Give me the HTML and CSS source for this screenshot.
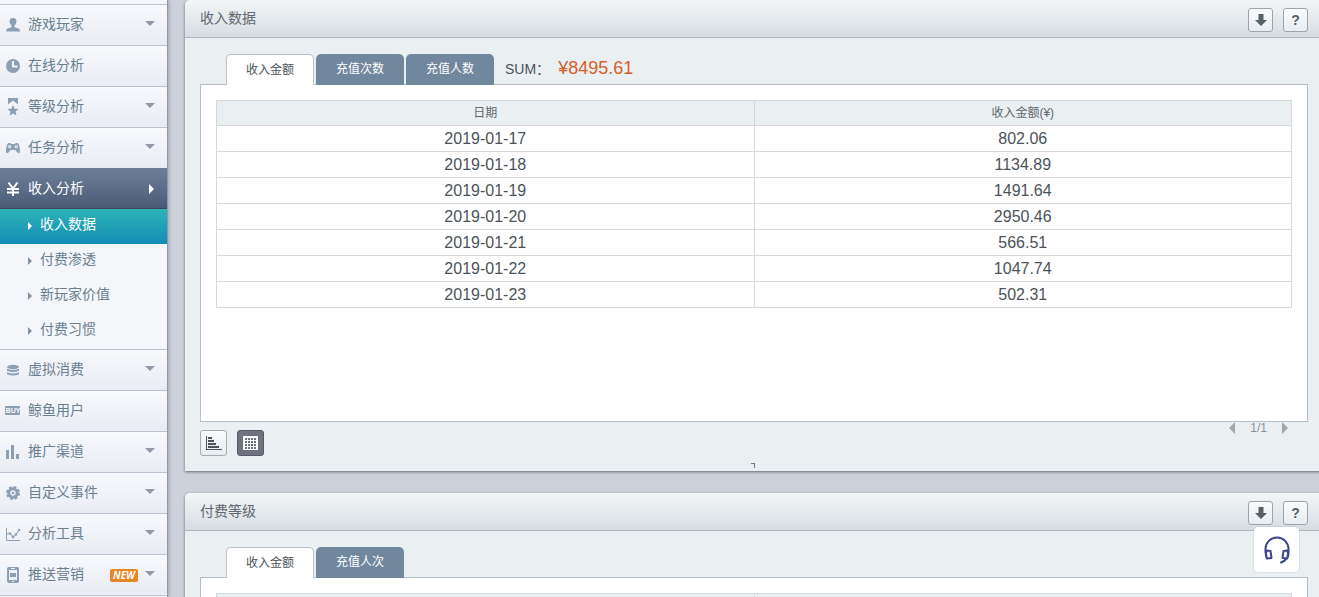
FILE: index.html
```
<!DOCTYPE html>
<html lang="zh-CN">
<head>
    <meta charset="UTF-8">
    <meta name="viewport" content="width=device-width, initial-scale=1.0">
    <title>收入数据</title>
    <link rel="stylesheet" href="styles.css">
</head>
<body>

<div class="layout">
    <nav class="sidebar">
        <a class="menu-item" href="#">
            <svg class="icon" viewBox="0 0 16 16"><path d="M8 1C5.500 1 4.400 2.600 4.600 4.600c.2 2 .9 3.200 1.900 3.900v1.700L2.500 11.500Q1 12.200 1 14.500h14q0-2.300-1.500-3l-4-1.300V8.500c1-.7 1.700-1.900 1.900-3.900C11.600 2.600 10.500 1 8 1z"/></svg>
            <span>游戏玩家</span><i class="arrow"></i>
        </a>
        <a class="menu-item" href="#">
            <svg class="icon" viewBox="0 0 16 16"><circle cx="8" cy="8" r="7"/><path class="line" d="M8 3v5.500h4.500"/></svg>
            <span>在线分析</span>
        </a>
        <a class="menu-item" href="#">
            <svg class="icon tall" viewBox="0 0 16 18"><path d="M3 0h10v6.500L8 2.500 3 6.500zM8 7l1.600 3.700 4 .3-3.100 2.600 1 4L8 15.500l-3.500 2.100 1-4L2.400 11l4-.3z"/></svg>
            <span>等级分析</span><i class="arrow"></i>
        </a>
        <a class="menu-item" href="#">
            <svg class="icon" viewBox="0 0 16 16"><path d="M4 3q2 0 2.500 1h3Q10 3 12 3c2.500 0 3 6 3 8.500 0 2-2 2-3 .5L10.300 10H5.700L4 12c-1 1.500-3 1.500-3-.5C1 9 1.500 3 4 3z"/><circle cx="4.700" cy="6.700" r="1.600" fill="#eff1f7"/><circle cx="4.700" cy="6.700" r=".6"/><circle cx="11.300" cy="6.700" r="1.600" fill="#eff1f7"/><circle cx="11.300" cy="6.700" r=".6"/></svg>
            <span>任务分析</span><i class="arrow"></i>
        </a>
        <a class="menu-item active" href="#">
            <svg class="icon" viewBox="0 0 16 16"><path class="line" d="M3.500 1.500L8 7.500l4.500-6M2 8h12M2 11.500h12M8 7.500V15"/></svg>
            <span>收入分析</span><i class="arrow-right"></i>
        </a>
        <div class="submenu">
            <a class="active" href="#"><i></i><span>收入数据</span></a>
            <a href="#"><i></i><span>付费渗透</span></a>
            <a href="#"><i></i><span>新玩家价值</span></a>
            <a href="#"><i></i><span>付费习惯</span></a>
        </div>
        <a class="menu-item" href="#">
            <svg class="icon" viewBox="0 0 16 16"><ellipse cx="8" cy="5" rx="6" ry="2.200"/><path d="M2 6.700q6 2.600 12 0v2q-6 2.800-12 0zM2 10.200q6 2.600 12 0v2q-6 2.800-12 0z"/></svg>
            <span>虚拟消费</span><i class="arrow"></i>
        </a>
        <a class="menu-item" href="#">
            <svg class="icon" viewBox="0 0 16 16"><rect x="0" y="3" width="15" height="9" rx="1"/><text class="buy" x="8" y="10">BUY</text></svg>
            <span>鲸鱼用户</span>
        </a>
        <a class="menu-item" href="#">
            <svg class="icon" viewBox="0 0 16 16"><path d="M1 6h3v9H1zM6 1h3v14H6zM11 10h3v5h-3z"/></svg>
            <span>推广渠道</span><i class="arrow"></i>
        </a>
        <a class="menu-item" href="#">
            <svg class="icon" viewBox="0 0 16 16"><circle cx="8" cy="8" r="5.700"/><circle class="teeth" cx="8" cy="8" r="6"/><circle cx="8" cy="8" r="2.700" fill="#f0f2f8"/><circle cx="8" cy="8" r="1.200"/></svg>
            <span>自定义事件</span><i class="arrow"></i>
        </a>
        <a class="menu-item" href="#">
            <svg class="icon" viewBox="0 0 16 16"><path class="thin" d="M1.500 2v12.500H15M2 8l3-.5 3 3.500 3-2.500 3-4.500"/><circle cx="5" cy="7.500" r="1.200"/><circle cx="8" cy="11" r="1.400"/><circle cx="11" cy="8.500" r="1.200"/><circle cx="14" cy="4" r="1.200"/></svg>
            <span>分析工具</span><i class="arrow"></i>
        </a>
        <a class="menu-item" href="#">
            <svg class="icon" viewBox="0 0 16 16"><path fill-rule="evenodd" d="M4 0h8q2 0 2 2v12q0 2-2 2H4q-2 0-2-2V2q0-2 2-2zM4 3v10h8V3zM6 1v1h4V1zM7 14v1h2v-1z"/><rect x="5" y="6" width="6" height="4"/></svg>
            <span>推送营销</span><b class="new">NEW</b><i class="arrow"></i>
        </a>
        <a class="menu-item" href="#"></a>
    </nav>

    <main class="content">
        <section class="panel">
            <header class="panel-header">
                <h2>收入数据</h2>
                <button class="tool" aria-label="下载"><svg viewBox="0 0 14 14"><path d="M4.500 1h5v6H13l-6 6-6-6h3.500z"/></svg></button>
                <button class="tool">?</button>
            </header>
            <div class="panel-body">
                <div class="tabs">
                    <button class="tab selected">收入金额</button>
                    <button class="tab">充值次数</button>
                    <button class="tab">充值人数</button>
                    <p class="sum">SUM： <strong>¥8495.61</strong></p>
                </div>
                <div class="box">
                    <table>
                        <thead>
                            <tr><th>日期</th><th>收入金额(¥)</th></tr>
                        </thead>
                        <tbody>
                            <tr><td>2019-01-17</td><td>802.06</td></tr>
                            <tr><td>2019-01-18</td><td>1134.89</td></tr>
                            <tr><td>2019-01-19</td><td>1491.64</td></tr>
                            <tr><td>2019-01-20</td><td>2950.46</td></tr>
                            <tr><td>2019-01-21</td><td>566.51</td></tr>
                            <tr><td>2019-01-22</td><td>1047.74</td></tr>
                            <tr><td>2019-01-23</td><td>502.31</td></tr>
                        </tbody>
                    </table>
                </div>
                <div class="panel-footer">
                    <button class="view" aria-label="图表"><svg viewBox="0 0 16 16"><path d="M0 1h1v13h15v1H0zM2 2h4v2H2zM2 5h6v2H2zM2 8h8v2H2zM2 11h11v2H2z"/></svg></button>
                    <button class="view selected" aria-label="表格"><svg viewBox="0 0 16 16"><path d="M0 1h15v14H0z"/><path class="grid" d="M2 4h12M2 7h12M2 10h12M2 13h12"/></svg></button>
                    <div class="pager">
                        <button class="prev" aria-label="上一页"></button>
                        <span>1/1</span>
                        <button class="next" aria-label="下一页"></button>
                    </div>
                </div>
            </div>
            <i class="corner"></i>
        </section>

        <section class="panel">
            <header class="panel-header">
                <h2>付费等级</h2>
                <button class="tool" aria-label="下载"><svg viewBox="0 0 14 14"><path d="M4.500 1h5v6H13l-6 6-6-6h3.500z"/></svg></button>
                <button class="tool">?</button>
            </header>
            <div class="panel-body">
                <div class="tabs">
                    <button class="tab selected">收入金额</button>
                    <button class="tab">充值人次</button>
                </div>
                <div class="box">
                    <table>
                        <thead>
                            <tr><th></th><th></th></tr>
                        </thead>
                    </table>
                </div>
            </div>
        </section>
    </main>
</div>

<button class="service" aria-label="客服">
    <svg viewBox="0 0 30 30"><path d="M3.500 18v-4a11.500 11.500 0 0 1 23 0v5c0 4-2.500 6.500-7.500 8.500M4.500 15.500l4 .5 1 7-4.500.5q-2-4-.5-8zM25.500 15.500l-4 .5-1 7 4.500.5q2-4 .5-8z"/></svg>
</button>

</body>
</html>
```
FILE: styles.css
```
* {
    box-sizing: border-box;
}
body {
    margin: 0;
    overflow: hidden;
    background-color: #cdd1da;
    color: #4c5358;
    font-family: "Liberation Sans", "Noto Sans CJK SC", sans-serif;
    font-size: 14px;
}
button {
    padding: 0;
    border: none;
    font-family: inherit;
    cursor: pointer;
}
.layout {
    display: flex;
    height: 100vh;
    overflow: hidden;
}

/* sidebar */
.sidebar {
    flex: none;
    width: 168px;
    padding-top: 4px;
    overflow: hidden;
    background-color: #f4f6fa;
    border-right: 1px solid #9297a3;
    box-shadow: 0 0 4px rgba(60, 70, 90, 0.5);
}
.sidebar a {
    color: #69808f;
    text-decoration: none;
}
.menu-item {
    display: flex;
    align-items: center;
    height: 41px;
    padding: 0 12px 0 5px;
    border-top: 1px solid #bcc3d0;
    background: linear-gradient(#f8f9fd, #e9ecf3);
}
.menu-item span {
    flex: 1;
    padding-bottom: 4px;
}
.icon {
    width: 16px;
    height: 16px;
    margin-right: 7px;
    fill: #8c9fb3;
}
.icon.tall {
    height: 18px;
}
.icon .line {
    fill: none;
    stroke: #f2f4f9;
    stroke-width: 2;
}
.icon .thin {
    fill: none;
    stroke: #8c9fb3;
}
.icon .teeth {
    fill: none;
    stroke: #8c9fb3;
    stroke-width: 2;
    stroke-dasharray: 2.700 2;
}
.icon .buy {
    fill: #fff;
    font-size: 7px;
    font-weight: bold;
    text-anchor: middle;
}
.arrow {
    margin-bottom: 4px;
    border: 5px solid transparent;
    border-top-color: #9298a8;
    border-bottom: none;
}
.arrow-right {
    border: 5px solid transparent;
    border-left-color: #fff;
    border-right: none;
    margin-right: 1px;
}
.new {
    margin-right: 7px;
    padding: 0 3px;
    border-radius: 2px;
    background-color: #e58626;
    color: #fff;
    font-family: "Open Sans", sans-serif;
    font-size: 10px;
    font-style: italic;
    line-height: 13px;
}
.sidebar .menu-item.active {
    border-top-color: #6a7b93;
    border-bottom: 1px solid #37485a;
    background: linear-gradient(#6c7f99, #4a5b77);
    color: #fff;
}
.menu-item.active .line {
    stroke: #fff;
}
.submenu a {
    display: flex;
    align-items: center;
    height: 35px;
    padding: 0 0 2px 28px;
}
.submenu span {
    padding-bottom: 5px;
}
.submenu i {
    margin-right: 8px;
    border: 4px solid transparent;
    border-left-color: #8590a0;
    border-right: none;
}
.submenu .active {
    background: linear-gradient(#2db3b6, #148cb5);
}
.sidebar .submenu .active {
    color: #fff;
}
.submenu .active i {
    border-left-color: #fff;
}

/* panels */
.content {
    flex: 1;
    min-width: 0;
    margin: 0 -4px 0 17px;
}
.panel {
    position: relative;
    margin-bottom: 22px;
    border-radius: 5px 5px 0 0;
    background-color: #eaeff2;
    box-shadow: 0 1px 3px rgba(50, 60, 75, 0.7);
}
.panel-header {
    display: flex;
    align-items: center;
    gap: 10px;
    height: 38px;
    padding: 2px 15px 0;
    border-bottom: 1px solid #aeb6bc;
    border-radius: 5px 5px 0 0;
    background: linear-gradient(#f3f6f8, #d6dde2);
}
.panel-header h2 {
    flex: 1;
    margin: 0;
    padding-bottom: 5px;
    color: #62676d;
    font-size: 14px;
    font-weight: normal;
}
.tool {
    width: 25px;
    height: 24px;
    border: 1px solid #9da5ac;
    border-radius: 3px;
    background: linear-gradient(#fafbfc, #e8edf0);
    color: #566065;
    font-size: 14px;
    font-weight: bold;
}
.tool svg {
    display: block;
    width: 14px;
    height: 14px;
    margin: 0 auto;
    fill: #566065;
}
.panel-body {
    padding: 16px 15px 15px;
}
.tabs {
    display: flex;
    gap: 2px;
    padding-left: 26px;
}
.tab {
    position: relative;
    width: 88px;
    height: 31px;
    margin-bottom: -1px;
    padding-bottom: 4px;
    border-radius: 5px 5px 0 0;
    background-color: #71879e;
    color: #fff;
    font-size: 12px;
}
.tab.selected {
    border: 1px solid #b9c1c7;
    border-bottom: none;
    background-color: #fff;
    color: #4c5358;
}
.sum {
    display: flex;
    align-items: center;
    gap: 8px;
    margin: 0 0 2px 9px;
}
.sum strong {
    color: #d55f2b;
    font-size: 18px;
    font-weight: normal;
}
.box {
    min-height: 338px;
    padding: 15px;
    border: 1px solid #b5bec4;
    background-color: #fff;
}
table {
    width: 100%;
    table-layout: fixed;
    border-collapse: collapse;
}
th, td {
    height: 26px;
    padding: 0;
    border: 1px solid #d5d9dc;
    text-align: center;
    line-height: 20px;
}
th {
    height: 25px;
    background-color: #eaeff2;
    color: #62676d;
    font-size: 12px;
    font-weight: normal;
}
td {
    font-size: 16px;
}
.panel-footer {
    display: flex;
    align-items: flex-start;
    gap: 10px;
}
.view {
    width: 27px;
    height: 26px;
    margin-top: 8px;
    border: 1px solid #a4abb1;
    border-radius: 3px;
    background: linear-gradient(#fafbfc, #e8edf0);
}
.view svg {
    display: block;
    width: 16px;
    height: 16px;
    margin: 0 auto;
    fill: #4c5358;
}
.view.selected {
    border-color: #555b66;
    background: #70737f;
}
.view.selected svg {
    fill: #fff;
}
.view .grid {
    stroke: #70737f;
    stroke-width: 2;
    stroke-dasharray: 2 1;
}
.pager {
    display: flex;
    align-items: center;
    gap: 15px;
    margin-left: auto;
    padding-right: 20px;
    color: #8c9195;
    font-size: 12px;
    line-height: 10px;
}
.pager button {
    border: 6px solid transparent;
    background: none;
}
.pager .prev {
    border-right-color: #a2a7ab;
    border-left: none;
}
.pager .next {
    border-left-color: #a2a7ab;
    border-right: none;
}
.corner {
    position: absolute;
    left: 50%;
    bottom: 3px;
    width: 4px;
    height: 5px;
    margin-left: -3px;
    border-top: 1px solid #70777d;
    border-right: 1px solid #70777d;
}

/* online service */
.service {
    position: fixed;
    right: 20px;
    bottom: 25px;
    z-index: 2;
    width: 45px;
    height: 45px;
    border-radius: 4px;
    background-color: #fff;
    box-shadow: 0 0 2px rgba(0, 0, 0, 0.2);
}
.service svg {
    display: block;
    width: 30px;
    height: 30px;
    margin: 0 auto;
    fill: none;
    stroke: #3f4490;
    stroke-width: 2;
    stroke-linejoin: round;
    stroke-linecap: round;
}
```
